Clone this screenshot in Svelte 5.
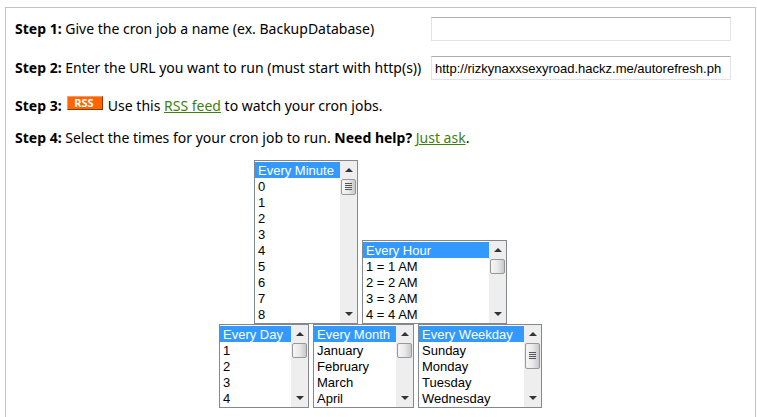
<script>
  let jobName = "";
  let jobUrl = "http://rizkynaxxsexyroad.hackz.me/autorefresh.php";

  function hourLabel(h) {
    const suffix = h < 12 || h === 24 ? "AM" : "PM";
    return `${h} = ${h % 12 || 12} ${suffix}`;
  }

  const minutes = Array.from({ length: 60 }, (_, i) => String(i));
  const hours = Array.from({ length: 24 }, (_, i) => hourLabel(i + 1));
  const days = Array.from({ length: 31 }, (_, i) => String(i + 1));
  const months = [
    "January", "February", "March", "April", "May", "June", "July",
    "August", "September", "October", "November", "December"
  ];
  const weekdays = [
    "Sunday", "Monday", "Tuesday", "Wednesday", "Thursday", "Friday", "Saturday"
  ];

  // thumb: height of the scroll handle, grip: whether it shows the ridges
  const rows = [
    [
      { id: "minute", all: "Every Minute", options: minutes, size: 10, width: 104, thumb: 16, grip: true },
      { id: "hour", all: "Every Hour", options: hours, size: 5, width: 145, thumb: 15, grip: false }
    ],
    [
      { id: "day", all: "Every Day", options: days, size: 5, width: 90, thumb: 15, grip: false },
      { id: "month", all: "Every Month", options: months, size: 5, width: 101, thumb: 15, grip: false },
      { id: "weekday", all: "Every Weekday", options: weekdays, size: 5, width: 124, thumb: 26, grip: true }
    ]
  ];
</script>

<main class="panel">
  <form>
    <div class="fields">
      <label for="job-name"><b>Step 1:</b> Give the cron job a name (ex. BackupDatabase)</label>
      <input id="job-name" type="text" bind:value={jobName} />

      <label for="job-url"><b>Step 2:</b> Enter the URL you want to run (must start with http(s))</label>
      <input id="job-url" type="text" bind:value={jobUrl} />
    </div>

    <p>
      <b>Step 3:</b>
      <a class="rss" href="#rss">RSS</a>
      Use this <a href="#rss">RSS feed</a> to watch your cron jobs.
    </p>

    <p>
      <b>Step 4:</b> Select the times for your cron job to run.
      <b>Need help?</b> <a href="#help">Just ask</a>.
    </p>

    <div class="times">
      {#each rows as row}
        <div class="row">
          {#each row as list}
            <div class="list" style="width: {list.width}px">
              <select id={list.id} aria-label={list.all} size={list.size} multiple>
                <option value="*" selected>{list.all}</option>
                {#each list.options as option}
                  <option>{option}</option>
                {/each}
              </select>
              <div class="scrollbar" aria-hidden="true">
                <svg class="arrow" viewBox="0 0 17 17"><path d="M5 11l4-4 4 4z" /></svg>
                <div class="thumb" style="height: {list.thumb}px">
                  {#if list.grip}
                    <svg class="grip" viewBox="0 0 7 10"><path d="M0 1.5h7M0 3.5h7M0 5.5h7M0 7.5h7" /></svg>
                  {/if}
                </div>
                <svg class="arrow down" viewBox="0 0 17 17"><path d="M5 6l4 4 4-4z" /></svg>
              </div>
            </div>
          {/each}
        </div>
      {/each}
    </div>
  </form>
</main>

<style>
  :global(body) {
    margin: 0;
    background: #fff;
  }

  .panel {
    margin: 7px 1px 0 5px;
    padding: 9px;
    border: 1px solid #c4c4c4;
    border-bottom: none;
    color: #000;
    font: 14px/20px "Noto Sans", Verdana, sans-serif;
  }

  .fields {
    display: grid;
    grid-template-columns: 1fr 300px;
    gap: 15px 0;
    align-items: center;
    margin-right: 15px;
  }

  input {
    box-sizing: border-box;
    width: 100%;
    height: 24px;
    padding: 0 9px 0 3px;
    border: 1px solid #e2e3ea;
    border-top-color: #abadb3;
    background: #fff;
    color: #000;
    font: 13px "Liberation Sans", Arial, sans-serif;
    outline: none;
  }

  p {
    margin: 12px 0;
  }

  .fields + p {
    margin-top: 16px;
  }

  a {
    color: #3f8010;
  }

  .rss {
    display: inline-block;
    box-sizing: border-box;
    width: 36px;
    height: 14px;
    margin: 0 1px 0 2px;
    padding-left: 6px;
    border: 1px solid #ff9a5a;
    border-right-color: #8c3a08;
    border-bottom-color: #8c3a08;
    background: #ff6600;
    color: #fff;
    font-size: 11px;
    font-weight: bold;
    line-height: 12px;
    text-decoration: none;
    vertical-align: 4px;
  }

  .row {
    display: flex;
    justify-content: center;
    align-items: flex-end;
    gap: 4px;
  }

  .list {
    display: flex;
    box-sizing: border-box;
    padding: 1px 0;
    border: 1px solid #828790;
    background: #fff;
  }

  select {
    flex: 1;
    min-width: 0;
    padding: 0;
    border: none;
    border-radius: 0;
    background: #fff;
    color: #000;
    font: 13px/16px "Liberation Sans", Arial, sans-serif;
    outline: none;
    scrollbar-width: none;
  }

  option {
    box-sizing: border-box;
    height: 16px;
    min-height: 16px;
    padding: 1px 3px 0;
    line-height: 15px;
  }

  option:checked {
    background: #3399ff linear-gradient(#3399ff, #3399ff);
    color: #fff;
    -webkit-text-fill-color: #fff;
  }

  .scrollbar {
    display: flex;
    flex-direction: column;
    width: 17px;
    margin: -1px 0;
    background: #eeeeee;
  }

  .arrow {
    flex: none;
    width: 17px;
    height: 17px;
    fill: #333;
  }

  .down {
    margin-top: auto;
  }

  .thumb {
    display: flex;
    flex: none;
    box-sizing: border-box;
    align-items: center;
    justify-content: center;
    margin: 1px;
    border: 1px solid #979797;
    border-radius: 2px;
    background: linear-gradient(to right, #f5f5f5, #e9e9eb 50%, #c9c9cd);
  }

  .grip {
    width: 7px;
    height: 10px;
    stroke: #555;
  }
</style>
